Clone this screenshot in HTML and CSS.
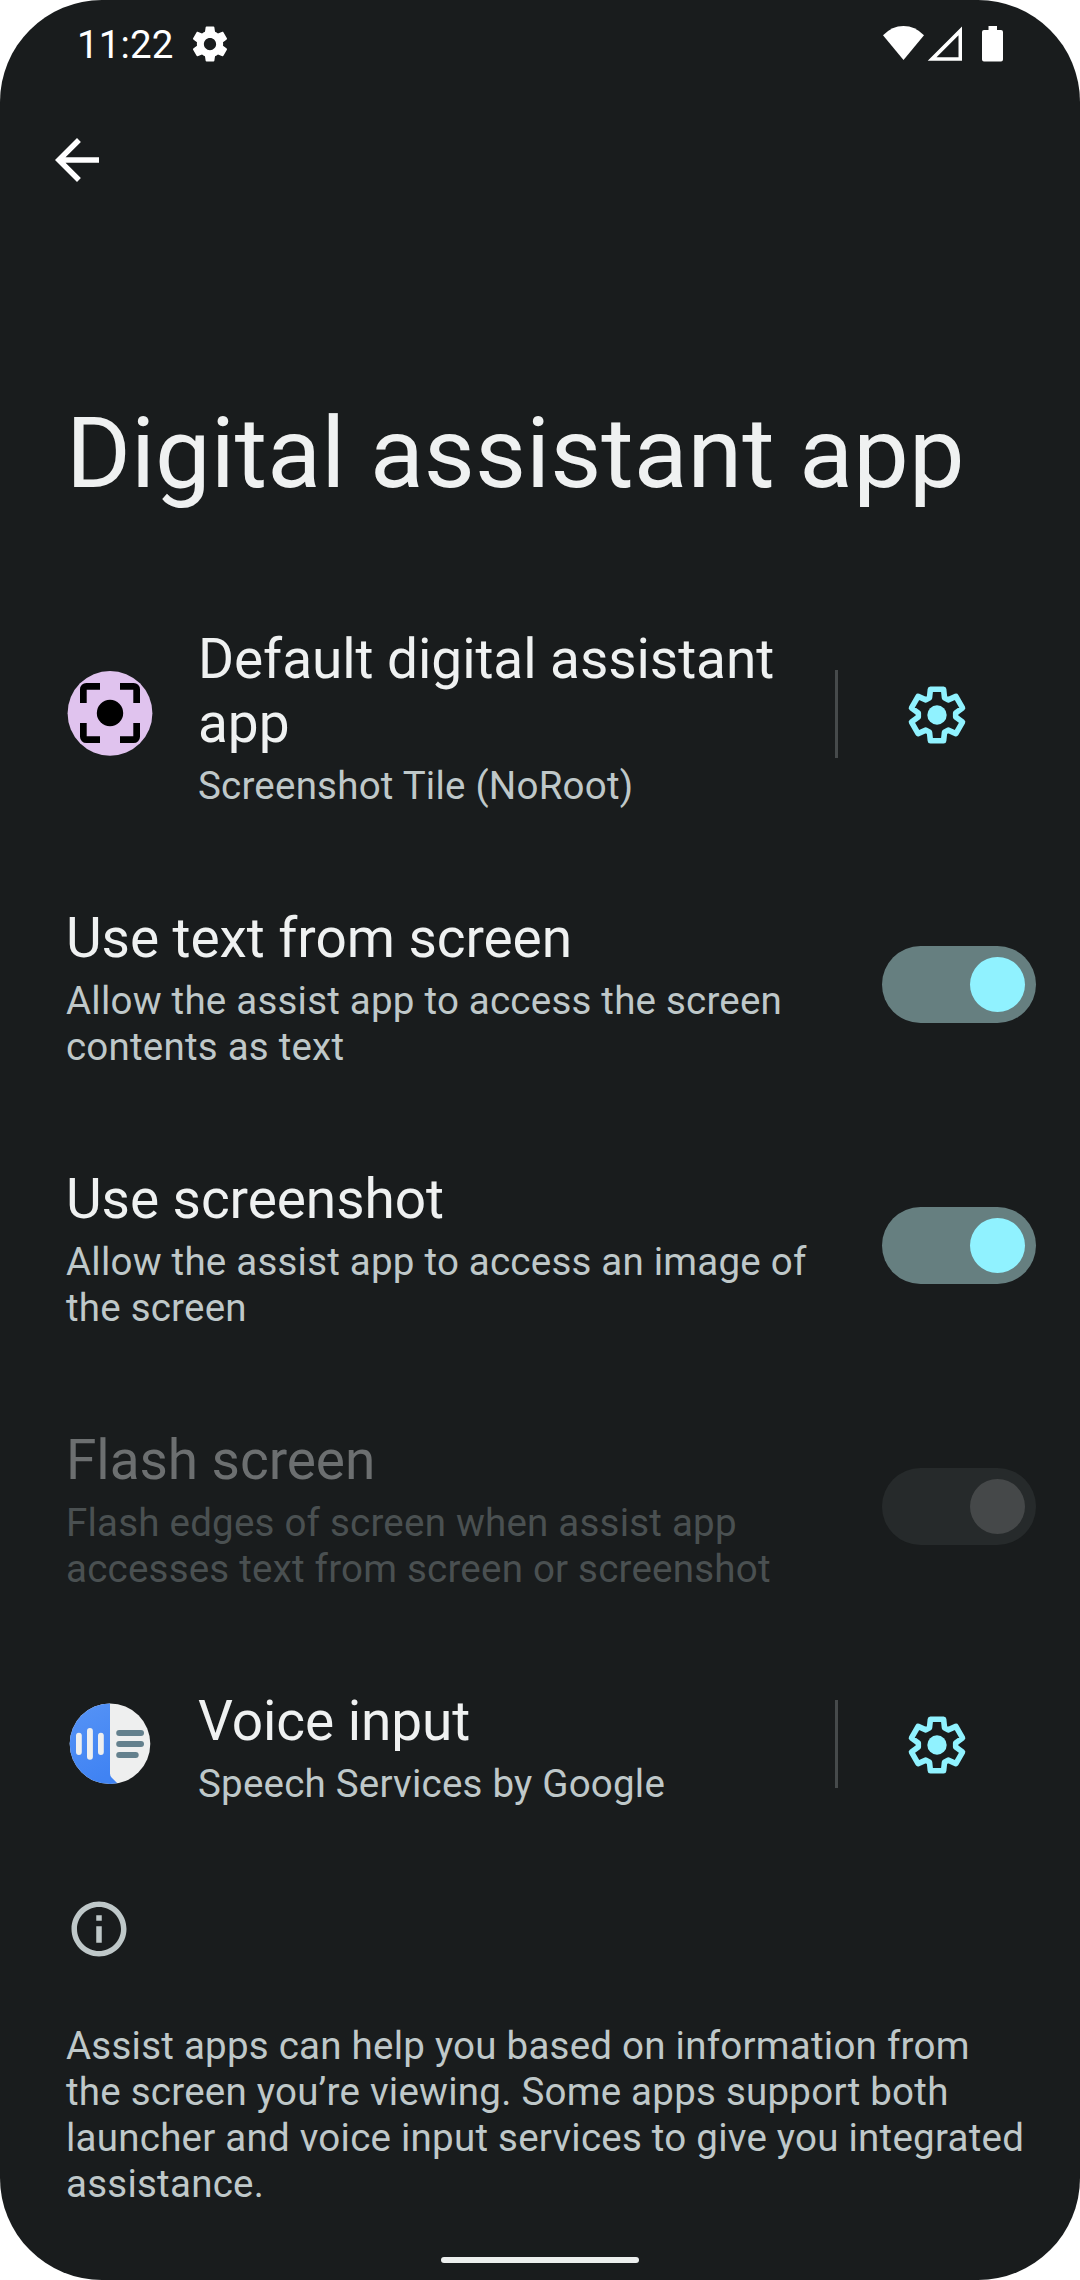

FILE: index.html
```
<!DOCTYPE html>
<html lang="en">
<head>
<meta charset="utf-8">
<title>Digital assistant app</title>
<link rel="stylesheet" href="styles.css">
</head>
<body>
<svg class="defs" width="0" height="0" aria-hidden="true">
  <symbol id="gear" viewBox="-33 -33 66 66">
    <path d="M-7.5-17.2L-6.6-25.7H6.6L7.5-17.2L11.2-15.1L18.9-18.6L25.5-7.1L18.7-2.1V2.1L25.5 7.1L18.9 18.6L11.2 15.1L7.5 17.2L6.6 25.7H-6.6L-7.5 17.2L-11.2 15.1L-18.9 18.6L-25.5 7.1L-18.7 2.1V-2.1L-25.5-7.1L-18.9-18.6L-11.2-15.1Z" fill="none" stroke="currentColor" stroke-width="5.6" stroke-linejoin="round"/>
    <circle r="9.7" fill="currentColor"/>
  </symbol>
</svg>
<div class="screen">
  <header class="status">
    <span class="clock">11:22</span>
    <svg class="status-gear" viewBox="0 0 24 24"><path fill="currentColor" d="M19.43 12.98c.04-.32.07-.64.07-.98s-.03-.66-.07-.98l2.11-1.65c.19-.15.24-.42.12-.64l-2-3.46c-.12-.22-.39-.3-.61-.22l-2.49 1c-.52-.4-1.08-.73-1.69-.98l-.38-2.65C14.46 2.18 14.25 2 14 2h-4c-.25 0-.46.18-.49.42l-.38 2.65c-.61.25-1.17.59-1.69.98l-2.49-1c-.23-.09-.49 0-.61.22l-2 3.46c-.13.22-.07.49.12.64l2.11 1.65c-.04.32-.07.65-.07.98s.03.66.07.98l-2.11 1.65c-.19.15-.24.42-.12.64l2 3.46c.12.22.39.3.61.22l2.49-1c.52.4 1.08.73 1.69.98l.38 2.65c.03.24.24.42.49.42h4c.25 0 .46-.18.49-.42l.38-2.65c.61-.25 1.17-.59 1.69-.98l2.49 1c.23.09.49 0 .61-.22l2-3.46c.12-.22.07-.49-.12-.64l-2.11-1.65zM12 15.5c-1.93 0-3.5-1.57-3.5-3.5s1.57-3.5 3.5-3.5 3.5 1.57 3.5 3.5-1.57 3.5-3.5 3.5z"/></svg>
    <svg class="status-icons" viewBox="0 0 122 38">
      <path fill="currentColor" d="M20.5 35L0 10.3Q9 1 20.5 1T41 10.3Z"/>
      <path fill="currentColor" fill-rule="evenodd" d="M44.7 35.8L79 1.5V35.8ZM53.5 32.3H75.5V10.3Z"/>
      <path fill="currentColor" d="M105.5 1h8.5v4h4a2 2 0 0 1 2 2v27.5a2 2 0 0 1-2 2h-17a2 2 0 0 1-2-2V7a2 2 0 0 1 2-2h4.5z"/>
    </svg>
  </header>
  <nav class="appbar">
    <svg class="icon" viewBox="0 0 24 24"><path fill="currentColor" d="M20 11H7.83l5.59-5.59L12 4l-8 8 8 8 1.41-1.41L7.83 13H20z"/></svg>
  </nav>
  <h1 class="heading">Digital assistant app</h1>
  <main>
    <section class="row row-default">
      <svg class="app-icon" viewBox="0 0 88 88">
        <circle cx="44" cy="43.3" r="42.4" fill="#e0c3ee"/>
        <path fill="none" stroke="#000" stroke-width="6.7" d="M17.35 33V19.35a3 3 0 0 1 3-3H34M54 16.35H67.65a3 3 0 0 1 3 3V33M70.65 53V66.65a3 3 0 0 1-3 3H54M34 69.65H20.35a3 3 0 0 1-3-3V53"/>
        <circle cx="44" cy="43" r="13.2"/>
      </svg>
      <div class="text">
        <h2 class="title">Default digital assistant app</h2>
        <p class="summary">Screenshot Tile (NoRoot)</p>
      </div>
      <div class="config"><svg class="icon"><use href="#gear"/></svg></div>
    </section>
    <section class="row row-switch">
      <div class="text">
        <h2 class="title">Use text from screen</h2>
        <p class="summary">Allow the assist app to access the screen contents as text</p>
      </div>
      <div class="switch"><span class="thumb"></span></div>
    </section>
    <section class="row row-switch">
      <div class="text">
        <h2 class="title">Use screenshot</h2>
        <p class="summary">Allow the assist app to access an image of the screen</p>
      </div>
      <div class="switch"><span class="thumb"></span></div>
    </section>
    <section class="row row-switch disabled">
      <div class="text">
        <h2 class="title">Flash screen</h2>
        <p class="summary">Flash edges of screen when assist app accesses text from screen or screenshot</p>
      </div>
      <div class="switch"><span class="thumb"></span></div>
    </section>
    <section class="row row-voice">
      <svg class="app-icon" viewBox="0 0 88 88">
        <defs>
          <clipPath id="disc"><circle cx="44" cy="43.8" r="40.3"/></clipPath>
          <linearGradient id="blue" x1="0" y1="0" x2="0.3" y2="1"><stop offset="0" stop-color="#5794f6"/><stop offset="1" stop-color="#4083f3"/></linearGradient>
        </defs>
        <g clip-path="url(#disc)">
          <path fill="#eeefef" d="M0 0h88v88H0z"/>
          <path fill="url(#blue)" d="M0 0H44V73.5Q44 76 45.8 77.7L56 88H0z"/>
        </g>
        <g fill="#eeefef"><rect x="10" y="32.7" width="5.8" height="22.3" rx="2.9"/><rect x="21" y="28" width="5.9" height="31.7" rx="2.9"/><rect x="32" y="32.7" width="5.8" height="22.3" rx="2.9"/></g>
        <g fill="#63808d"><rect x="50.2" y="29.9" width="27.8" height="6" rx="3"/><rect x="50.2" y="41" width="27.8" height="6" rx="3"/><rect x="50.2" y="52" width="22.5" height="6" rx="3"/></g>
      </svg>
      <div class="text">
        <h2 class="title">Voice input</h2>
        <p class="summary">Speech Services by Google</p>
      </div>
      <div class="config"><svg class="icon"><use href="#gear"/></svg></div>
    </section>
    <footer class="info">
      <svg class="icon" viewBox="0 0 24 24"><path fill="currentColor" d="M11 7h2v2h-2zm0 4h2v6h-2zm1-9C6.48 2 2 6.48 2 12s4.48 10 10 10 10-4.48 10-10S17.52 2 12 2zm0 18c-4.41 0-8-3.59-8-8s3.59-8 8-8 8 3.59 8 8-3.59 8-8 8z"/></svg>
      <p class="info-text">Assist apps can help you based on information from the screen you’re viewing. Some apps support both launcher and voice input services to give you integrated assistance.</p>
    </footer>
  </main>
  <div class="nav-handle"></div>
</div>
</body>
</html>
```

FILE: styles.css
```
* { box-sizing: border-box; margin: 0; padding: 0; }

body {
  background: #fff;
  font-family: Roboto, "Liberation Sans", sans-serif;
  font-weight: 400;
}

.defs { display: block; }

.screen {
  display: flex;
  flex-direction: column;
  width: 1080px;
  height: 2280px;
  padding-bottom: 17px;
  overflow: hidden;
  border-radius: 102px;
  background: #191c1d;
  color: #eff1f1;
}

.icon { display: block; width: 66px; height: 66px; }

.status {
  display: flex;
  align-items: center;
  height: 88px;
  padding: 0 75px 0 77px;
  color: #fff;
}
.clock { padding-top: 1px; font-size: 38.5px; line-height: 46px; letter-spacing: 0.15px; }
.status-gear { width: 42px; height: 42px; margin-left: 15px; }
.status-icons { width: 122px; height: 38px; margin-left: auto; }

.appbar { height: 144px; padding: 28px 44px; color: #fff; }
.appbar .icon { margin-top: 11px; }

.heading {
  height: 342px;
  padding: 163px 0 0 66px;
  font-size: 99px;
  font-weight: 400;
  line-height: 116px;
  letter-spacing: 0.04px;
}

.row {
  display: flex;
  align-items: center;
  padding-left: 66px;
}
.row-default { height: 280px; }
.row-switch { height: 261px; padding-right: 44px; }
.row-voice { height: 214px; }

.app-icon { width: 88px; height: 88px; margin-right: 44px; }

.text { align-self: flex-start; width: 625px; padding-top: 52px; }
.row-default .text { padding-top: 53px; }
.row-switch .text { width: 770px; }
.title { font-size: 55px; font-weight: 400; line-height: 64px; letter-spacing: -0.07px; }
.summary {
  margin-top: 8px;
  color: #bfc8c9;
  font-size: 38.5px;
  line-height: 46px;
  letter-spacing: 0.22px;
}

.config {
  display: flex;
  align-items: center;
  height: 88px;
  margin-left: 12px;
  padding: 2px 0 0 66px;
  border-left: 3px solid #464a4b;
  color: #90f2ff;
}

.switch {
  width: 154px;
  height: 77px;
  margin-left: auto;
  padding: 11px;
  border-radius: 39px;
  background: #667f80;
}
.thumb {
  display: block;
  width: 55px;
  height: 55px;
  margin-left: auto;
  border-radius: 50%;
  background: #90f2ff;
}

.disabled .title { color: #6c6f70; }
.disabled .summary { color: #4a5051; }
.disabled .switch { background: #262a2b; }
.disabled .thumb { background: #454849; }

.info { padding: 45px 0 0 66px; color: #bfc8c9; }
.info-text {
  width: 962px;
  margin-top: 61px;
  font-size: 38.5px;
  line-height: 46px;
  letter-spacing: 0.24px;
}

.nav-handle {
  width: 198px;
  height: 6px;
  margin: auto auto 0;
  border-radius: 3px;
  background: #ecefee;
}
```
